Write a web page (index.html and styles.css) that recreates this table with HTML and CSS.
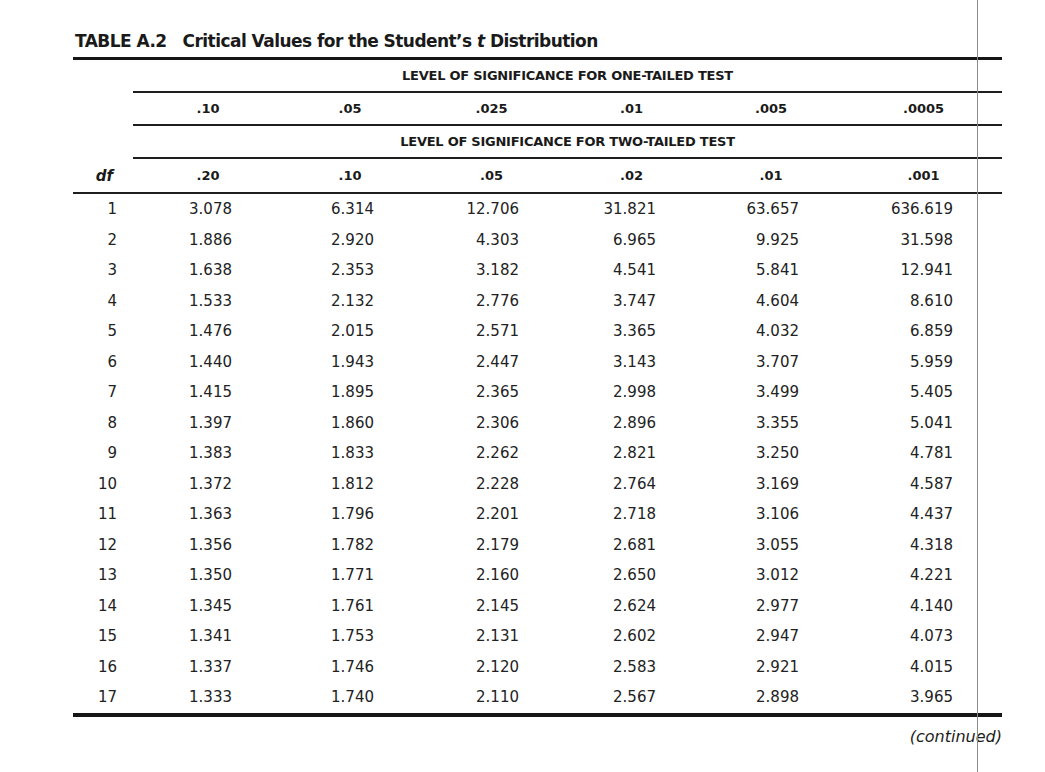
FILE: index.html
```html
<!DOCTYPE html>
<html lang="en">
<head>
<meta charset="utf-8">
<title>Table A.2 Critical Values for the Student's t Distribution</title>
<link rel="stylesheet" href="styles.css">
</head>
<body>
<main class="page">
  <h1 class="title"><span class="label">TABLE A.2</span>Critical Values for the Student’s <i>t</i> Distribution</h1>
  <div class="table">
    <div class="hrow">
      <div class="blank"></div>
      <div class="group">LEVEL OF SIGNIFICANCE FOR ONE-TAILED TEST</div>
    </div>
    <div class="hrow">
      <div class="blank"></div>
      <div class="hd">.10</div><div class="hd">.05</div><div class="hd">.025</div><div class="hd">.01</div><div class="hd">.005</div><div class="hd">.0005</div>
    </div>
    <div class="hrow">
      <div class="blank"></div>
      <div class="group">LEVEL OF SIGNIFICANCE FOR TWO-TAILED TEST</div>
    </div>
    <div class="hrow last">
      <div class="hd df">df</div>
      <div class="hd">.20</div><div class="hd">.10</div><div class="hd">.05</div><div class="hd">.02</div><div class="hd">.01</div><div class="hd">.001</div>
    </div>
    <div class="row"><div>1</div><div>3.078</div><div>6.314</div><div>12.706</div><div>31.821</div><div>63.657</div><div>636.619</div></div>
    <div class="row"><div>2</div><div>1.886</div><div>2.920</div><div>4.303</div><div>6.965</div><div>9.925</div><div>31.598</div></div>
    <div class="row"><div>3</div><div>1.638</div><div>2.353</div><div>3.182</div><div>4.541</div><div>5.841</div><div>12.941</div></div>
    <div class="row"><div>4</div><div>1.533</div><div>2.132</div><div>2.776</div><div>3.747</div><div>4.604</div><div>8.610</div></div>
    <div class="row"><div>5</div><div>1.476</div><div>2.015</div><div>2.571</div><div>3.365</div><div>4.032</div><div>6.859</div></div>
    <div class="row"><div>6</div><div>1.440</div><div>1.943</div><div>2.447</div><div>3.143</div><div>3.707</div><div>5.959</div></div>
    <div class="row"><div>7</div><div>1.415</div><div>1.895</div><div>2.365</div><div>2.998</div><div>3.499</div><div>5.405</div></div>
    <div class="row"><div>8</div><div>1.397</div><div>1.860</div><div>2.306</div><div>2.896</div><div>3.355</div><div>5.041</div></div>
    <div class="row"><div>9</div><div>1.383</div><div>1.833</div><div>2.262</div><div>2.821</div><div>3.250</div><div>4.781</div></div>
    <div class="row"><div>10</div><div>1.372</div><div>1.812</div><div>2.228</div><div>2.764</div><div>3.169</div><div>4.587</div></div>
    <div class="row"><div>11</div><div>1.363</div><div>1.796</div><div>2.201</div><div>2.718</div><div>3.106</div><div>4.437</div></div>
    <div class="row"><div>12</div><div>1.356</div><div>1.782</div><div>2.179</div><div>2.681</div><div>3.055</div><div>4.318</div></div>
    <div class="row"><div>13</div><div>1.350</div><div>1.771</div><div>2.160</div><div>2.650</div><div>3.012</div><div>4.221</div></div>
    <div class="row"><div>14</div><div>1.345</div><div>1.761</div><div>2.145</div><div>2.624</div><div>2.977</div><div>4.140</div></div>
    <div class="row"><div>15</div><div>1.341</div><div>1.753</div><div>2.131</div><div>2.602</div><div>2.947</div><div>4.073</div></div>
    <div class="row"><div>16</div><div>1.337</div><div>1.746</div><div>2.120</div><div>2.583</div><div>2.921</div><div>4.015</div></div>
    <div class="row"><div>17</div><div>1.333</div><div>1.740</div><div>2.110</div><div>2.567</div><div>2.898</div><div>3.965</div></div>
  </div>
  <p class="cont">(continued)</p>
</main>
<div class="fold"></div>
</body>
</html>
```
FILE: styles.css
```css
html, body {
  margin: 0;
  padding: 0;
  background: #ffffff;
}

body {
  color: #1c1c1c;
  font-family: "DejaVu Sans", "Liberation Sans", sans-serif;
  height: 772px;
  overflow: hidden;
}

.page {
  width: 929px;
  padding: 31px 0 0 73px;
}

.title {
  margin: 0 0 6px 2px;
  font-size: 17px;
  line-height: 20px;
  font-weight: bold;
  letter-spacing: -0.55px;
  color: #1a1a1a;
}

.title .label {
  margin-right: 16px;
}

.title i {
  font-style: italic;
}

.table {
  display: grid;
  grid-template-columns: 60px 150px 134px 149px 131px 148px 157px;
  border-top: 3px solid #161616;
  border-bottom: 4px solid #161616;
}

.hrow,
.row {
  display: contents;
}

.hrow > div {
  height: 33px;
  box-sizing: border-box;
  display: flex;
  align-items: center;
  justify-content: center;
  font-size: 13px;
  font-weight: bold;
  color: #1a1a1a;
}

.hrow.last > div {
  height: 35px;
  border-bottom: 2px solid #1e1e1e;
}

.hd,
.group {
  border-bottom: 2px solid #1e1e1e;
}

.group {
  grid-column: 2 / -1;
  letter-spacing: -0.25px;
}

.hd.df {
  justify-content: flex-end;
  padding-right: 20px;
  font-size: 15px;
  font-style: italic;
}

.row > div {
  height: 30.5px;
  line-height: 30.5px;
  text-align: right;
  font-size: 15px;
  color: #222222;
}

.row > div:nth-child(1) { padding-right: 16px; }
.row > div:nth-child(2) { padding-right: 51px; }
.row > div:nth-child(3) { padding-right: 43px; }
.row > div:nth-child(4) { padding-right: 47px; }
.row > div:nth-child(5) { padding-right: 41px; }
.row > div:nth-child(6) { padding-right: 46px; }
.row > div:nth-child(7) { padding-right: 49px; }

.cont {
  margin: 10px 0 0;
  text-align: right;
  font-size: 16px;
  line-height: 20px;
  font-style: italic;
  color: #1c1c1c;
}

.fold {
  position: absolute;
  left: 977px;
  top: 0;
  width: 1px;
  height: 772px;
  background: #8a8a8a;
}
```
